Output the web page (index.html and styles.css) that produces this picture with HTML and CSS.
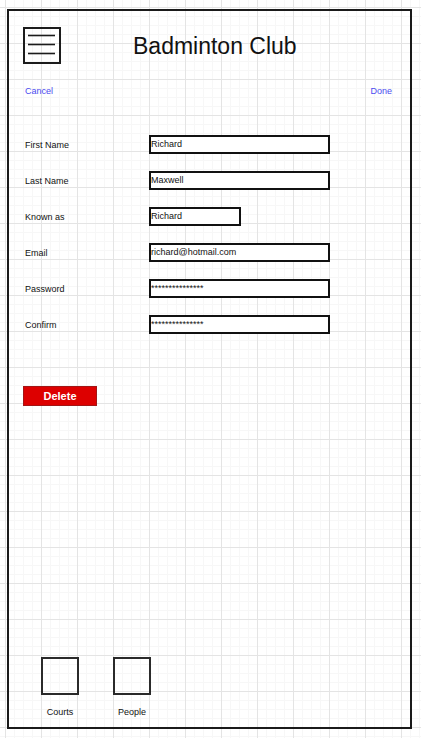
FILE: index.html
```html
<!DOCTYPE html>
<html>
<head>
<meta charset="utf-8">
<link rel="stylesheet" href="styles.css">
</head>
<body>
<div class="frame">
  <header class="header">
    <svg class="menu" width="38" height="37" viewBox="0 0 38 37">
      <rect x="1" y="1" width="36" height="35" fill="none" stroke="#1c1c1c" stroke-width="2"/>
      <line x1="5" y1="8.5" x2="32" y2="8.5" stroke="#1c1c1c" stroke-width="1.6"/>
      <line x1="5" y1="17.5" x2="32" y2="17.5" stroke="#1c1c1c" stroke-width="1.6"/>
      <line x1="5" y1="26.5" x2="32" y2="26.5" stroke="#1c1c1c" stroke-width="1.6"/>
    </svg>
    <h1 class="title">Badminton Club</h1>
  </header>
  <div class="actions">
    <span class="link">Cancel</span>
    <span class="link">Done</span>
  </div>
  <div class="form">
    <div class="row"><span class="label">First Name</span><span class="field">Richard</span></div>
    <div class="row"><span class="label">Last Name</span><span class="field">Maxwell</span></div>
    <div class="row"><span class="label">Known as</span><span class="field short">Richard</span></div>
    <div class="row"><span class="label">Email</span><span class="field">richard@hotmail.com</span></div>
    <div class="row"><span class="label">Password</span><span class="field">***************</span></div>
    <div class="row"><span class="label">Confirm</span><span class="field">***************</span></div>
  </div>
  <div class="delete">Delete</div>
  <nav class="nav">
    <div class="nav-item"><div class="nav-box"></div><span class="nav-label">Courts</span></div>
    <div class="nav-item"><div class="nav-box"></div><span class="nav-label">People</span></div>
  </nav>
</div>
</body>
</html>
```
FILE: styles.css
```css
html {
  background-color: #fff;
  background-image:
    linear-gradient(#e4e4e4 1px, transparent 1px),
    linear-gradient(90deg, #e4e4e4 1px, transparent 1px),
    linear-gradient(#f7f7f7 1px, transparent 1px),
    linear-gradient(90deg, #f7f7f7 1px, transparent 1px);
  background-size: 36px 36px, 36px 36px, 9px 9px, 9px 9px;
  background-position: 5px 7px, 5px 7px, 5px 7px, 5px 7px;
  min-height: 100%;
}
body {
  margin: 0;
  font-family: "Liberation Sans", Arial, sans-serif;
  color: #111;
}
.frame {
  margin: 9px 0 0 7px;
  width: 405px;
  height: 720px;
  box-sizing: border-box;
  border: 2px solid #1a1a1a;
  display: flex;
  flex-direction: column;
}
.header {
  display: flex;
  align-items: flex-start;
  padding: 16px 0 0 14px;
}
.menu {
  display: block;
  flex: none;
}
.title {
  margin: 7px 0 0 72px;
  font-size: 23px;
  line-height: 24px;
  font-weight: normal;
  color: #111;
}
.actions {
  display: flex;
  justify-content: space-between;
  margin-top: 22px;
  padding: 0 18px 0 16px;
  font-size: 9px;
  line-height: 11px;
}
.link {
  color: #4b4bf0;
}
.form {
  margin-top: 38px;
  display: flex;
  flex-direction: column;
  gap: 17px;
}
.row {
  display: flex;
  align-items: center;
  height: 19px;
}
.label {
  width: 140px;
  padding-left: 16px;
  box-sizing: border-box;
  font-size: 9px;
  color: #111;
}
.field {
  width: 181px;
  height: 19px;
  box-sizing: border-box;
  border: 2px solid #111;
  background: #fff;
  font-size: 9px;
  line-height: 15px;
  padding-left: 0;
  color: #111;
}
.field.short {
  width: 92px;
}
.delete {
  margin: 52px 0 0 14px;
  width: 74px;
  height: 20px;
  box-sizing: border-box;
  background: #dd0000;
  border: 1px solid #a31515;
  color: #fff;
  font-weight: bold;
  font-size: 11px;
  line-height: 18px;
  text-align: center;
}
.nav {
  margin-top: auto;
  display: flex;
  gap: 34px;
  padding: 0 0 9px 32px;
}
.nav-item {
  display: flex;
  flex-direction: column;
  align-items: center;
  width: 38px;
}
.nav-box {
  width: 38px;
  height: 38px;
  box-sizing: border-box;
  border: 2px solid #2a2a2a;
}
.nav-label {
  margin-top: 12px;
  font-size: 9px;
  line-height: 11px;
  white-space: nowrap;
}
```
